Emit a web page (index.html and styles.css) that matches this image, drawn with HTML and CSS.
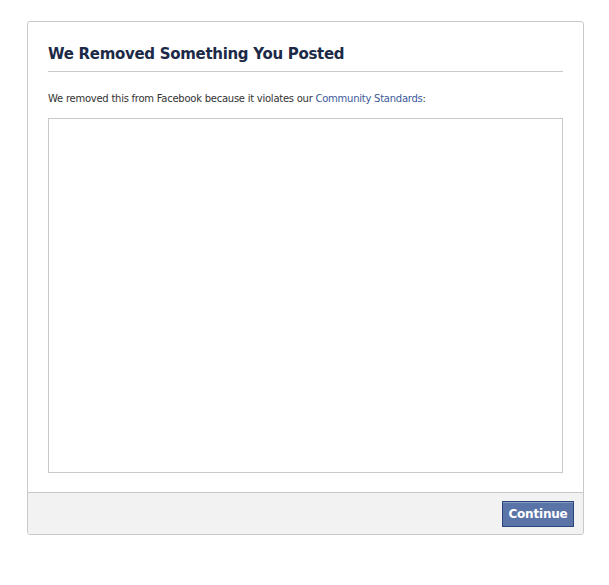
FILE: index.html
```html
<!DOCTYPE html>
<html>
<head>
<meta charset="utf-8">
<link rel="stylesheet" href="styles.css">
</head>
<body>
<div class="dialog">
  <div class="dialog-body">
    <h2 class="title">We Removed Something You Posted</h2>
    <p class="desc">We removed this from Facebook because it violates our <a href="#" class="link">Community Standards</a>:</p>
    <div class="content-box"></div>
  </div>
  <div class="dialog-footer">
    <button class="btn">Continue</button>
  </div>
</div>
</body>
</html>
```
FILE: styles.css
```css
html, body {
  margin: 0;
  padding: 0;
  background: #fff;
}
body {
  padding: 21px 0 0 27px;
  font-family: "DejaVu Sans", Tahoma, sans-serif;
}
.dialog {
  width: 557px;
  height: 514px;
  box-sizing: border-box;
  border: 1px solid #c9c9c9;
  border-radius: 3px;
  display: flex;
  flex-direction: column;
  overflow: hidden;
}
.dialog-body {
  flex: 1;
  padding: 0 20px;
}
.title {
  margin: 22px 0 0;
  font-size: 15px;
  font-weight: bold;
  color: #1c2a47;
  line-height: 20px;
  letter-spacing: -0.3px;
  padding-bottom: 7px;
  border-bottom: 1px solid #c9c9c9;
}
.desc {
  margin: 20px 0 0;
  font-size: 10px;
  line-height: 14px;
  letter-spacing: -0.25px;
  color: #333;
}
.link {
  color: #3b5998;
  text-decoration: none;
}
.content-box {
  margin-top: 12px;
  height: 355px;
  box-sizing: border-box;
  border: 1px solid #c9c9c9;
}
.dialog-footer {
  height: 42px;
  box-sizing: border-box;
  border-top: 1px solid #c9c9c9;
  background: #f2f2f2;
  display: flex;
  justify-content: flex-end;
  align-items: flex-start;
  padding: 8px 9px 0 0;
}
.btn {
  height: 26px;
  width: 72px;
  background: #5b74a8;
  border: 1px solid #29447e;
  color: #fff;
  font-family: "DejaVu Sans", Tahoma, sans-serif;
  font-weight: bold;
  font-size: 12px;
  letter-spacing: -0.2px;
  padding: 0;
  box-shadow: inset 0 1px 0 #8a9cc2;
}
```
